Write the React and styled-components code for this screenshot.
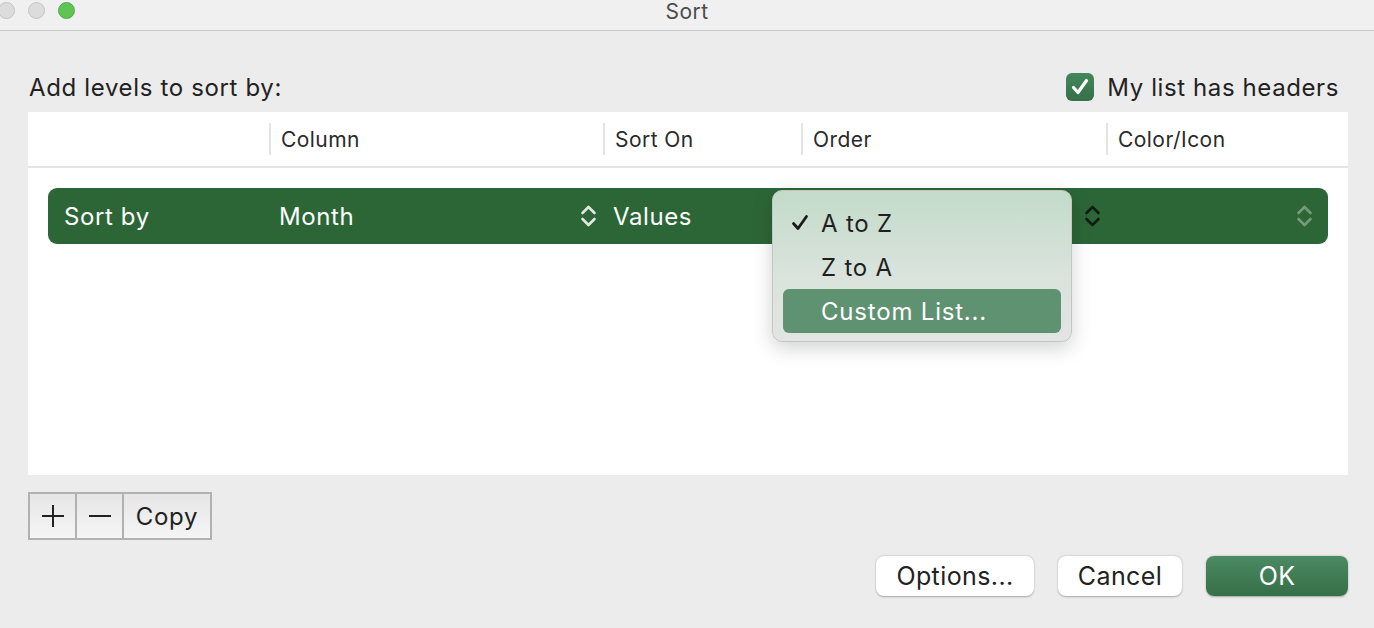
import React from 'react';
import styled, { createGlobalStyle } from 'styled-components';

const GlobalStyle = createGlobalStyle`
    html, body {
        margin: 0;
        padding: 0;
        background: #ececec;
    }
    body {
        font-family: Inter, "Noto Sans", "Liberation Sans", sans-serif;
        color: #222;
    }
`;

const Window = styled.div`
    width: 1374px;
    height: 628px;
    display: flex;
    flex-direction: column;
    background: #ececec;
    overflow: hidden;
`;

const TitleBar = styled.header`
    height: 30px;
    flex: none;
    display: grid;
    grid-template-columns: 1fr auto 1fr;
    align-items: start;
    background: #f0f0f0;
    border-bottom: 1px solid #c9c9c9;
`;

const Lights = styled.div`
    display: flex;
    gap: 13px;
    margin-left: -2px;
    margin-top: 2px;
`;

const Light = styled.span`
    width: 17px;
    height: 17px;
    border-radius: 50%;
    box-sizing: border-box;
    background: ${p => p.green ? '#5fc454' : '#dcdcdc'};
    border: 1px solid ${p => p.green ? '#4fae45' : '#c4c4c4'};
`;

const Title = styled.div`
    font-size: 21px;
    line-height: 23px;
    letter-spacing: 0.5px;
    color: #4b4b4b;
`;

const Content = styled.main`
    flex: 1;
    display: flex;
    flex-direction: column;
    padding: 36px 26px 0 28px;
`;

const TopRow = styled.div`
    height: 40px;
    display: flex;
    align-items: center;
    justify-content: space-between;
    margin-bottom: 5px;
`;

const Label = styled.div`
    font-size: 24px;
    letter-spacing: 0.65px;
    color: #222;
    margin-left: 1px;
`;

const CheckLabel = styled.label`
    display: flex;
    align-items: center;
    gap: 13px;
    font-size: 24px;
    letter-spacing: 0.6px;
    color: #222;
    margin-right: 9px;
`;

const CheckBox = styled.span`
    width: 28px;
    height: 28px;
    border-radius: 6px;
    background: linear-gradient(#43875a, #346f48);
    display: flex;
    align-items: center;
    justify-content: center;
`;

const Table = styled.section`
    height: 363px;
    background: #fff;
    display: flex;
    flex-direction: column;
`;

const HeaderRow = styled.div`
    height: 54px;
    flex: none;
    display: grid;
    grid-template-columns: 241px 334px 198px 305px 1fr;
    align-items: center;
    border-bottom: 2px solid #e4e4e4;
`;

const HeaderCell = styled.div`
    height: 32px;
    display: flex;
    align-items: center;
    padding-left: 10px;
    font-size: 21px;
    letter-spacing: 0.45px;
    color: #2a2a2a;
    border-left: ${p => p.first ? 'none' : '2px solid #e4e4e4'};
`;

const Rows = styled.div`
    padding: 20px 20px 0;
`;

const LevelRow = styled.div`
    height: 56px;
    border-radius: 9px;
    background: #2c6637;
    display: grid;
    grid-template-columns: 221px 334px 198px 305px 1fr;
    align-items: center;
    color: #fff;
    font-size: 24px;
    letter-spacing: 0.6px;
`;

const Cell = styled.div`
    position: relative;
    height: 100%;
    display: flex;
    align-items: center;
    justify-content: space-between;
    padding: 0 ${p => p.padRight || 0}px 0 ${p => p.padLeft || 0}px;
`;

const Popup = styled.div`
    position: absolute;
    left: -29px;
    top: 2px;
    width: 300px;
    height: 152px;
    box-sizing: border-box;
    padding: 10px 10px 0;
    border-radius: 10px;
    border: 1px solid #c3c7c4;
    background: linear-gradient(#c3dbc9 0%, #d9e3dc 55%, #e3e4e3 100%);
    box-shadow: 0 6px 20px rgba(0, 0, 0, 0.18);
    display: flex;
    flex-direction: column;
    z-index: 2;
    letter-spacing: 0.8px;
`;

const MenuItem = styled.div`
    height: 44px;
    flex: none;
    display: flex;
    align-items: center;
    border-radius: 6px;
    padding-left: 7px;
    font-size: 24px;
    color: ${p => p.active ? '#fff' : '#1f1f1f'};
    background: ${p => p.active ? '#5f9270' : 'transparent'};
`;

const Mark = styled.span`
    width: 31px;
    display: flex;
    align-items: center;
`;

const BottomBar = styled.div`
    margin-top: 17px;
    display: flex;
`;

const Segmented = styled.div`
    display: flex;
    height: 48px;
    border: 2px solid #b1b1b1;
    box-sizing: border-box;
    background: linear-gradient(#e6e6e6, #f5f5f5);
`;

const Segment = styled.button`
    all: unset;
    box-sizing: border-box;
    width: ${p => p.w}px;
    display: flex;
    align-items: center;
    justify-content: center;
    font-family: inherit;
    font-size: 24px;
    letter-spacing: 0.7px;
    color: #222;
    border-left: ${p => p.first ? 'none' : '2px solid #b1b1b1'};
`;

const Footer = styled.div`
    margin-top: 16px;
    display: flex;
    justify-content: flex-end;
    gap: 24px;
`;

const Button = styled.button`
    all: unset;
    box-sizing: border-box;
    height: 40px;
    width: ${p => p.w}px;
    display: flex;
    align-items: center;
    justify-content: center;
    border-radius: 8px;
    font-family: inherit;
    font-size: 25px;
    letter-spacing: 0.4px;
    color: ${p => p.primary ? '#fff' : '#222'};
    background: ${p => p.primary ? 'linear-gradient(#4b8a63, #356f47)' : '#fff'};
    box-shadow: 0 0.5px 2px rgba(0, 0, 0, 0.3);
`;

const Chevrons = ({ color }) => (
    <svg width="17" height="24" viewBox="0 0 17 24" fill="none" stroke={color} strokeWidth="2.6" strokeLinecap="round" strokeLinejoin="round">
        <path d="M2.5 9 L8.5 3 L14.5 9" />
        <path d="M2.5 15 L8.5 21 L14.5 15" />
    </svg>
);

const Check = ({ color, size, width }) => (
    <svg width={size} height={size} viewBox="0 0 20 20" fill="none" stroke={color} strokeWidth={width} strokeLinecap="round" strokeLinejoin="round">
        <path d="M3.5 10.5 L8 15.5 L16.5 3.5" />
    </svg>
);

const Plus = () => (
    <svg width="24" height="24" viewBox="0 0 24 24" stroke="#222" strokeWidth="2">
        <path d="M12 1 V23 M1 12 H23" />
    </svg>
);

const Minus = () => (
    <svg width="24" height="24" viewBox="0 0 24 24" stroke="#222" strokeWidth="2">
        <path d="M1 12 H23" />
    </svg>
);

const App = () => {
    return (
        <>
            <GlobalStyle />
            <Window>
                <TitleBar>
                    <Lights>
                        <Light />
                        <Light />
                        <Light green />
                    </Lights>
                    <Title>Sort</Title>
                    <div />
                </TitleBar>
                <Content>
                    <TopRow>
                        <Label>Add levels to sort by:</Label>
                        <CheckLabel>
                            <CheckBox><Check color="#fff" size={20} width={3.2} /></CheckBox>
                            My list has headers
                        </CheckLabel>
                    </TopRow>
                    <Table>
                        <HeaderRow>
                            <HeaderCell first />
                            <HeaderCell>Column</HeaderCell>
                            <HeaderCell>Sort On</HeaderCell>
                            <HeaderCell>Order</HeaderCell>
                            <HeaderCell>Color/Icon</HeaderCell>
                        </HeaderRow>
                        <Rows>
                            <LevelRow>
                                <Cell padLeft={16}>Sort by</Cell>
                                <Cell padLeft={10} padRight={6}>
                                    Month
                                    <Chevrons color="rgba(255,255,255,0.85)" />
                                </Cell>
                                <Cell padLeft={10}>Values</Cell>
                                <Cell padRight={5}>
                                    <span />
                                    <Chevrons color="#0f1f12" />
                                    <Popup>
                                        <MenuItem>
                                            <Mark><Check color="#1a1a1a" size={20} width={2.8} /></Mark>
                                            A to Z
                                        </MenuItem>
                                        <MenuItem>
                                            <Mark />
                                            Z to A
                                        </MenuItem>
                                        <MenuItem active>
                                            <Mark />
                                            Custom List...
                                        </MenuItem>
                                    </Popup>
                                </Cell>
                                <Cell padRight={15}>
                                    <span />
                                    <Chevrons color="rgba(255,255,255,0.35)" />
                                </Cell>
                            </LevelRow>
                        </Rows>
                    </Table>
                    <BottomBar>
                        <Segmented>
                            <Segment first w={45}><Plus /></Segment>
                            <Segment w={47}><Minus /></Segment>
                            <Segment w={88}>Copy</Segment>
                        </Segmented>
                    </BottomBar>
                    <Footer>
                        <Button w={158}>Options...</Button>
                        <Button w={124}>Cancel</Button>
                        <Button primary w={142}>OK</Button>
                    </Footer>
                </Content>
            </Window>
        </>
    );
};

export default App;
